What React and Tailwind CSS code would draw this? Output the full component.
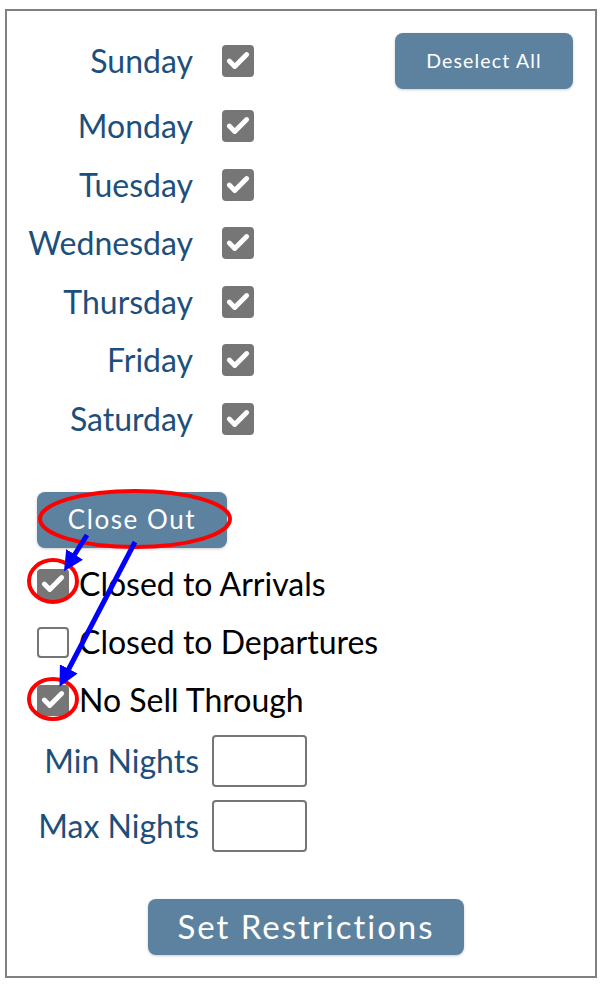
import { Check } from "lucide-react";

const days = ["Sunday", "Monday", "Tuesday", "Wednesday", "Thursday", "Friday", "Saturday"];

function Box({ checked, size = "w-[32px] h-[32px]" }) {
  if (!checked) {
    return <div className={`${size} rounded-[4px] border-2 border-[#767676] bg-white`} />;
  }
  return (
    <div className={`${size} rounded-[4px] bg-[#767676] flex items-center justify-center`}>
      <Check size={26} strokeWidth={4.5} className="text-white" />
    </div>
  );
}

function Annotations() {
  return (
    <svg className="absolute inset-0 pointer-events-none" width="604" height="992">
      <defs>
        <marker id="head" markerWidth="4" markerHeight="4" refX="2.5" refY="2" orient="auto">
          <path d="M0,0 L4,2 L0,4 z" fill="#0000ff" />
        </marker>
      </defs>
      <ellipse cx="135" cy="519" rx="95" ry="28" fill="none" stroke="#ff0000" strokeWidth="4" />
      <ellipse cx="53" cy="581" rx="24" ry="21" fill="none" stroke="#ff0000" strokeWidth="4" />
      <ellipse cx="53" cy="699" rx="24" ry="20" fill="none" stroke="#ff0000" strokeWidth="4" />
      <line x1="87" y1="535" x2="68" y2="565" stroke="#0000ff" strokeWidth="5" markerEnd="url(#head)" />
      <line x1="135" y1="542" x2="63" y2="680" stroke="#0000ff" strokeWidth="5" markerEnd="url(#head)" />
    </svg>
  );
}

const btn = "rounded-[8px] bg-[#5d82a0] text-white font-normal tracking-[0.06em] shadow-[0_1px_3px_rgba(0,0,0,0.2)]";

export default function App() {
  return (
    <div className="relative w-[604px] h-[992px] bg-white pt-[9px] pl-[5px]" style={{ fontFamily: "Lato, 'Open Sans', sans-serif" }}>
      <div className="w-[592px] h-[969px] border-2 border-[#808080] flex flex-col">
        {/* Days */}
        <div className="flex">
          <div className="flex flex-col pt-[34px]">
            {days.map((d, i) => (
              <div key={d} className={`flex items-center h-[32px] ${i === 0 ? "" : i === 1 ? "mt-[33px]" : "mt-[26.6px]"}`}>
                <span className="w-[186px] text-right text-[32px] text-[#1d4f7c] leading-none">{d}</span>
                <div className="ml-[29px]">
                  <Box checked />
                </div>
              </div>
            ))}
          </div>
          <div className="ml-[141px] pt-[22px]">
            <button className={`w-[178px] h-[56px] text-[19.5px] ${btn}`}>Deselect All</button>
          </div>
        </div>

        {/* Close out */}
        <div className="mt-[57px] pl-[30px]">
          <button className={`w-[190px] h-[56px] text-[26px] ${btn}`}>Close Out</button>
        </div>
        <div className="pl-[30px] flex flex-col">
          {[
            ["Closed to Arrivals", true],
            ["Closed to Departures", false],
            ["No Sell Through", true],
          ].map(([label, c], i) => (
            <div key={label} className={`flex items-center h-[31px] ${i === 0 ? "mt-[21px]" : "mt-[27px]"}`}>
              <Box checked={c} size="w-[32px] h-[31px]" />
              <span className="ml-[10px] text-[32px] text-black leading-none">{label}</span>
            </div>
          ))}
        </div>

        {/* Nights */}
        <div className="flex flex-col mt-[19px]">
          {["Min Nights", "Max Nights"].map((l, i) => (
            <div key={l} className={`flex items-center ${i ? "mt-[13px]" : ""}`}>
              <span className="w-[192px] text-right text-[32px] text-[#1d4f7c] leading-none">{l}</span>
              <input className="ml-[13px] w-[95px] h-[52px] rounded-[4px] border-2 border-[#767676]" />
            </div>
          ))}
        </div>

        <div className="mt-[47px] pl-[141px]">
          <button className={`w-[316px] h-[56px] text-[33px] ${btn}`}>Set Restrictions</button>
        </div>
      </div>
      <Annotations />
    </div>
  );
}
